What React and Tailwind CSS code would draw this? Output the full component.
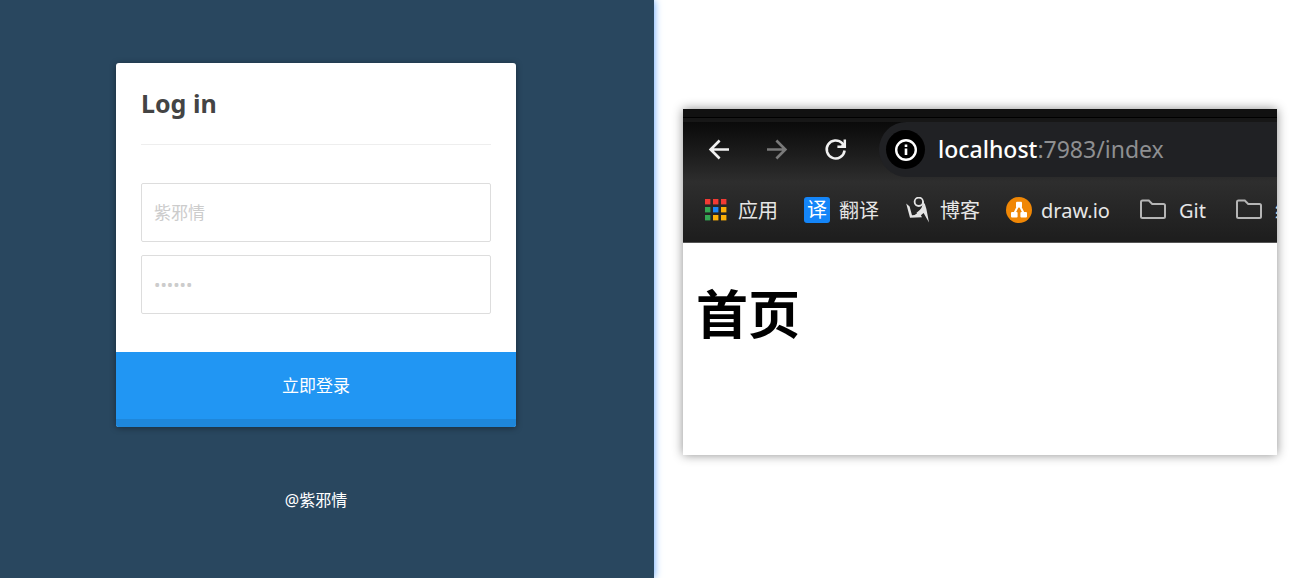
import clsx from "clsx";

const uiFont = "font-['Noto_Sans','Noto_Sans_CJK_SC',sans-serif]";

const BackIcon = ({ className }) => (
  <svg viewBox="0 0 24 24" className={clsx("size-6", className)} fill="none" stroke="currentColor" strokeWidth="2.6">
    <path d="M22 11.5H4M12.6 2.5L3.6 11.5L12.6 20.5" />
  </svg>
);

const ReloadIcon = () => (
  <svg viewBox="0 0 24 24" className="size-6" fill="none" stroke="currentColor" strokeWidth="2.5">
    <path d="M21.6 12.5A9 9 0 1 1 19.2 5.2L21 8" />
    <path d="M21.8 1.5V8.8H14.4" />
    <path d="M21.8 4V8.8H17Z" fill="currentColor" stroke="none" />
  </svg>
);

const InfoIcon = () => (
  <svg viewBox="0 0 24 24" className="size-6" fill="none" stroke="white" strokeWidth="2.4">
    <circle cx="12" cy="12" r="9.8" />
    <path d="M12 10.6v6.4M12 6.6v2.4" strokeWidth="2.6" />
  </svg>
);

const appColors = [
  "#f23a34", "#f23a34", "#f23a34",
  "#34a853", "#1a86f5", "#fbaf08",
  "#34a853", "#fbaf08", "#fbaf08",
];

const AppsIcon = () => (
  <svg viewBox="0 0 26 26" className="size-[26px]">
    {appColors.map((color, i) => (
      <rect key={i} x={2 + (i % 3) * 8} y={2 + Math.floor(i / 3) * 8} width="5.4" height="5.4" fill={color} />
    ))}
  </svg>
);

const TranslateIcon = () => (
  <span className="flex size-[26px] items-center justify-center rounded-[3px] bg-[#1485f8] text-[20px] leading-none text-white">
    译
  </span>
);

const BlogIcon = () => (
  <svg viewBox="0 0 26 26" className="size-[26px]" fill="none" stroke="#e4e4e4">
    <circle cx="13.8" cy="4.8" r="4.2" strokeWidth="1.8" />
    <path d="M18 4.5C19.2 9 17.4 13 12 16.4" strokeWidth="1.8" />
    <path d="M1.2 6.4L4.6 9.6L7 18.2L15.6 17.8L17 20.2L5 20.8Z" fill="#e4e4e4" stroke="none" />
    <path d="M17.6 10.5L19.6 6L21.4 12L24 25.6L18.6 16L15.6 18.4L8 19L13.4 15.4Z" fill="#e4e4e4" stroke="none" />
  </svg>
);

const DrawIcon = () => (
  <svg viewBox="0 0 26 26" className="size-[26px]">
    <circle cx="13" cy="13" r="13" fill="#f08705" />
    <path d="M12 9L8 17M14 9L18 17" stroke="white" strokeWidth="2" />
    <g fill="white">
      <rect x="10" y="4.8" width="6" height="5.6" rx="1" />
      <rect x="5" y="15" width="6.6" height="5.6" rx="1" />
      <rect x="14.4" y="15" width="6.6" height="5.6" rx="1" />
    </g>
  </svg>
);

const FolderIcon = () => (
  <svg viewBox="0 0 34 26" className="h-[26px] w-[34px]" fill="none" stroke="#b5b5b5" strokeWidth="2">
    <path d="M6.5 3.6H12.8L16.2 7H27.5Q29 7 29 8.5V19.5Q29 21 27.5 21H6.5Q5 21 5 19.5V5.1Q5 3.6 6.5 3.6Z" />
  </svg>
);

const bookmarks = [
  { label: "应用", icon: <AppsIcon /> },
  { label: "翻译", icon: <TranslateIcon /> },
  { label: "博客", icon: <BlogIcon /> },
  { label: "draw.io", icon: <DrawIcon /> },
  { label: "Git", icon: <FolderIcon /> },
  { label: "编程", icon: <FolderIcon /> },
];

const inputClass =
  "block h-[59px] w-full rounded-[2px] border border-[#dddddd] bg-white px-3 text-[17px] text-[#444] placeholder:text-[#cccccc] outline-none";

const LoginForm = () => (
  <form
    className="w-[400px] overflow-hidden rounded-[3px] bg-white shadow-[0_1px_6px_rgba(0,0,0,0.4)]"
    onSubmit={(e) => e.preventDefault()}
  >
    <div className="px-[25px] pb-[38px]">
      <h1 className="border-b border-[#eeeeee] pt-6 pb-[25px] text-[25px] leading-8 font-bold text-[#444444]">
        Log in
      </h1>
      <div className="mt-[38px] flex flex-col gap-[13px]">
        <input type="text" aria-label="Username" placeholder="紫邪情" className={inputClass} />
        <input type="password" aria-label="Password" placeholder="••••••" className={inputClass} />
      </div>
    </div>
    <button type="submit" className="block h-[75px] w-full border-b-8 border-[#1e87db] bg-[#2196f3] text-[17px] text-white">
      立即登录
    </button>
  </form>
);

const BrowserWindow = () => (
  <section className="overflow-hidden bg-white shadow-[0_0_10px_rgba(0,0,0,0.45)]">
    <div className="h-2 bg-[#111111]" />
    <div className="h-[5px] border-t border-black bg-[#171717]" />
    <div className="border-b border-[#555555] bg-linear-to-b from-[#0a0a0a] via-[#2e2e2e] via-50% to-[#1d1d1d]">
      <div className="flex h-[55px] items-center">
        <div className="flex shrink-0 items-center gap-[34px] px-6 pr-8 text-[#f1f1f1]">
          <button type="button" aria-label="Back">
            <BackIcon />
          </button>
          <button type="button" aria-label="Forward" className="text-[#7a7a7a]">
            <BackIcon className="-scale-x-100" />
          </button>
          <button type="button" aria-label="Reload">
            <ReloadIcon />
          </button>
        </div>
        <div className="flex h-full min-w-0 flex-1 items-center gap-[13px] rounded-l-full bg-[#202124] pl-[7px]">
          <span className="flex size-[39px] shrink-0 items-center justify-center rounded-full bg-black">
            <InfoIcon />
          </span>
          <span className="text-[23px] whitespace-nowrap text-[#8e8f91]">
            <span className="font-medium text-white">localhost</span>:7983/index
          </span>
        </div>
      </div>
      <nav className="flex h-[65px] items-center gap-[26px] overflow-hidden pl-5">
        {bookmarks.map((item) => (
          <a
            key={item.label}
            href="#"
            className="flex shrink-0 items-center gap-[9px] text-[20px] text-[#e6e6e6]"
          >
            {item.icon}
            <span className="pt-[2px] leading-7">{item.label}</span>
          </a>
        ))}
      </nav>
    </div>
    <div className="px-[13px] pt-[35px] pb-[105px]">
      <h2 className="text-[52px] leading-[72px] font-bold text-black">首页</h2>
    </div>
  </section>
);

export default function App() {
  return (
    <main className={clsx("grid min-h-screen grid-cols-[654fr_636fr] bg-white", uiFont)}>
      <div className="flex flex-col items-center bg-[#29475f] pt-[63px] pr-[22px] shadow-[0_0_8px_#5aa2ff]">
        <LoginForm />
        <p className="mt-[61px] text-[16px] leading-6 text-white">@紫邪情</p>
      </div>
      <div className="min-w-0 pt-[109px] pr-[13px] pl-[29px]">
        <BrowserWindow />
      </div>
    </main>
  );
}
